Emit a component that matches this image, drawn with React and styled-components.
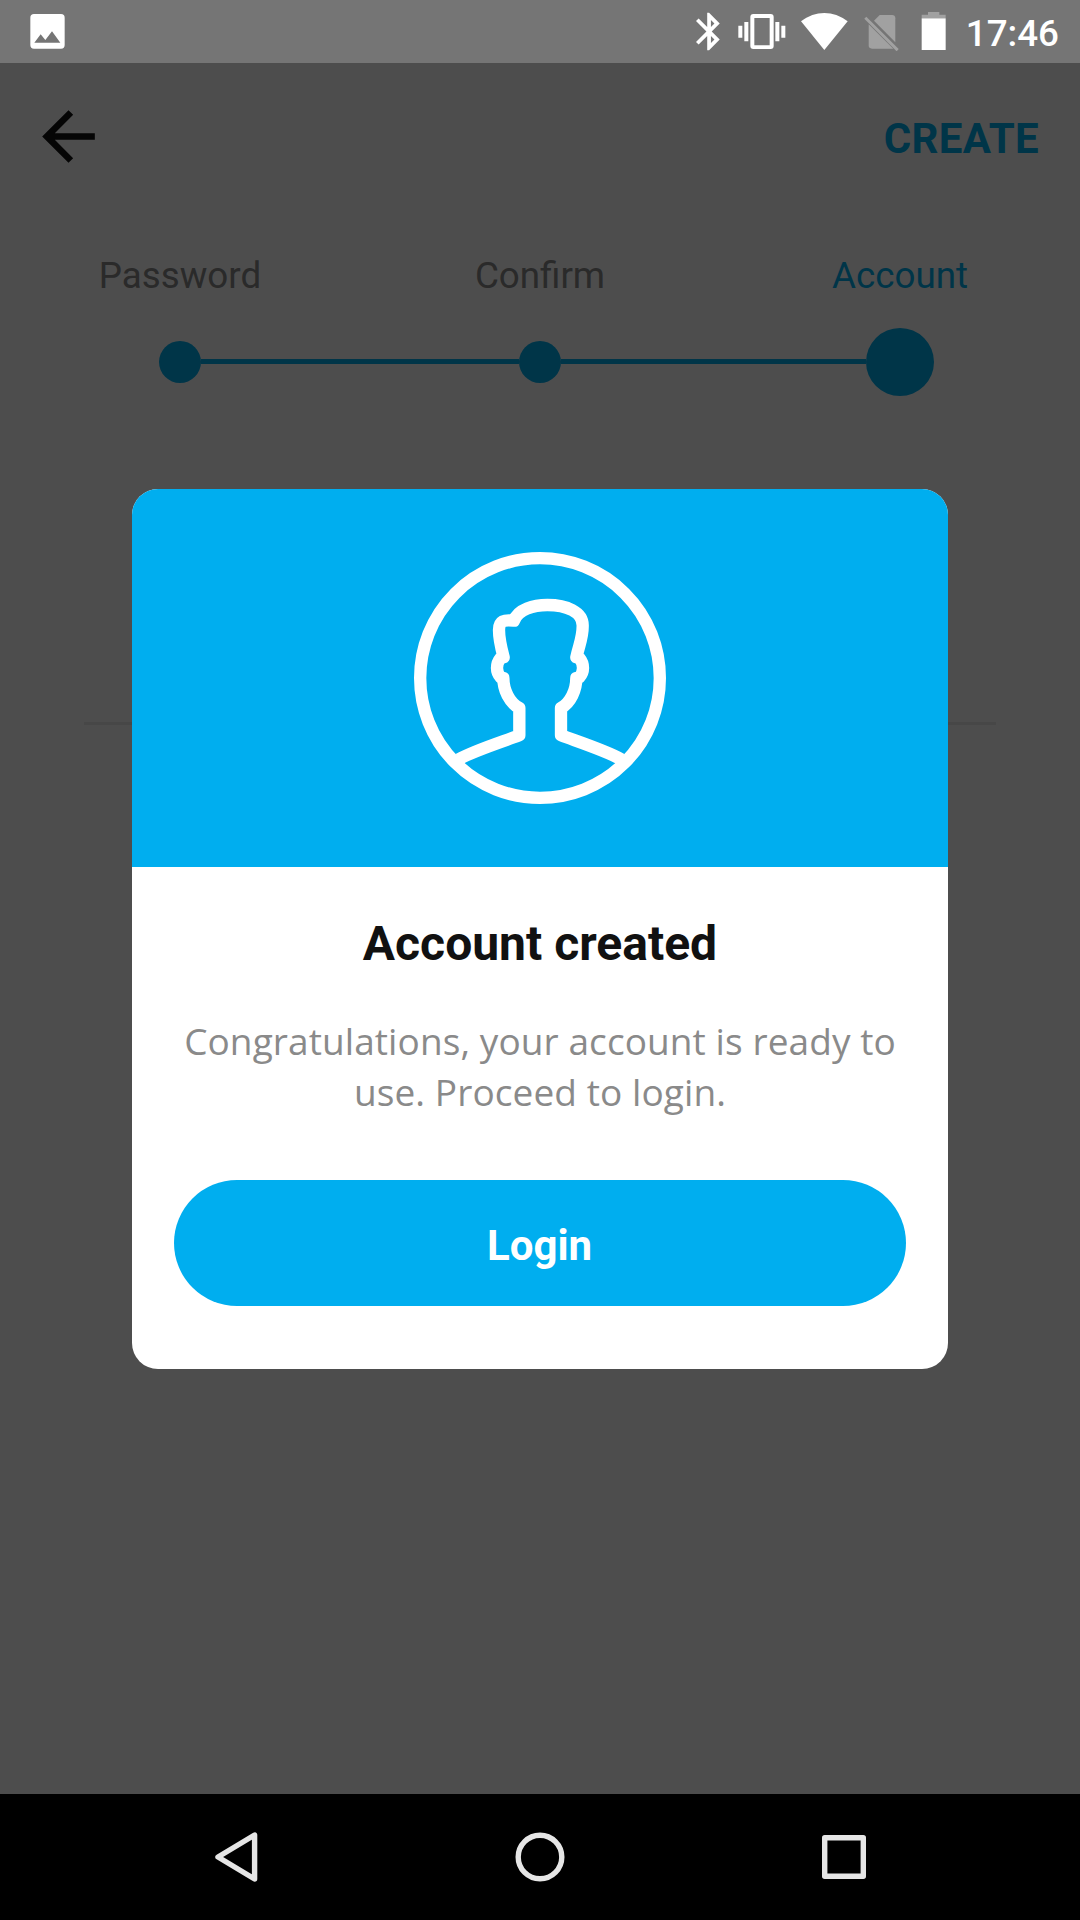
import React from "react";
import styled, { createGlobalStyle } from "styled-components";

const BLUE = "#00aeef";
const INK = "#111111";
const MUTED = "#8a8a8a";

const GlobalStyle = createGlobalStyle`
  *, *::before, *::after { box-sizing: border-box; }
  body { margin: 0; }
  svg { display: block; }
`;

const Phone = styled.div`
  display: flex;
  flex-direction: column;
  width: 1080px;
  height: 1920px;
  overflow: hidden;
  font-family: Roboto, "Liberation Sans", sans-serif;
`;

const StatusBar = styled.header`
  display: flex;
  align-items: flex-start;
  justify-content: space-between;
  height: 63px;
  padding: 12px 21px 0 30px;
  background: #757575;
  color: #ffffff;
`;

const StatusIcons = styled.div`
  display: flex;
  align-items: flex-start;
`;

const StatusGlyph = styled.svg`
  width: ${(p) => p.$width}px;
  height: 39px;
  margin-right: ${(p) => p.$after || 0}px;
  fill: currentColor;
`;

const Clock = styled.time`
  font-size: 36.75px;
  font-weight: 500;
  line-height: 43px;
`;

const Screen = styled.main`
  position: relative;
  flex: 1;
  display: flex;
  flex-direction: column;
  background: #ffffff;
`;

const Toolbar = styled.div`
  display: flex;
  align-items: center;
  justify-content: space-between;
  height: 147px;
  padding: 0 41px 0 29px;
`;

const IconButton = styled.button`
  padding: 0;
  border: 0;
  background: none;
  color: ${INK};
`;

const TextButton = styled.button`
  padding: 3px 0 0;
  border: 0;
  background: none;
  color: ${BLUE};
  font: 700 42px/49px Roboto, sans-serif;
  letter-spacing: 0.3px;
`;

const Stepper = styled.ol`
  display: grid;
  grid-template-columns: repeat(3, 1fr);
  width: 1080px;
  margin: 0;
  padding: 44px 0 0;
  list-style: none;
`;

const Step = styled.li`
  display: flex;
  flex-direction: column;
  align-items: center;
  gap: 30px;
`;

const StepLabel = styled.span`
  font-size: 36.75px;
  line-height: 43px;
  color: ${(p) => (p.$active ? BLUE : MUTED)};
`;

const Track = styled.div`
  display: grid;
  grid-template-columns: 1fr auto 1fr;
  align-items: center;
  width: 100%;
  height: 70px;
`;

const Rail = styled.span`
  height: 5px;
  margin-bottom: 1px;
  background: ${(p) => (p.$hidden ? "transparent" : BLUE)};
`;

const Dot = styled.span`
  width: ${(p) => (p.$active ? 68 : 42)}px;
  height: ${(p) => (p.$active ? 68 : 42)}px;
  border-radius: 50%;
  background: ${BLUE};
`;

const FieldLine = styled.hr`
  width: 912px;
  height: 3px;
  margin: 325px auto 0;
  border: 0;
  background: #ececec;
`;

const Overlay = styled.div`
  position: absolute;
  inset: 0;
  display: flex;
  align-items: center;
  justify-content: center;
  background: rgba(0, 0, 0, 0.698);
`;

const Dialog = styled.section`
  width: 816px;
  height: 880px;
  margin-top: 1px;
  border-radius: 26px;
  overflow: hidden;
  background: #ffffff;
  text-align: center;
`;

const DialogHero = styled.div`
  display: flex;
  justify-content: center;
  padding: 63px 0;
  background: ${BLUE};
`;

const DialogBody = styled.div`
  display: flex;
  flex-direction: column;
  padding: 49px 42px 0;
`;

const Title = styled.h1`
  margin: 0;
  color: ${INK};
  font-size: 48px;
  font-weight: 700;
  line-height: 56px;
`;

const Message = styled.p`
  margin: 43px 0 0;
  color: ${MUTED};
  font: 400 37px/51px "Open Sans", "Noto Sans", sans-serif;
  letter-spacing: 0.09px;
`;

const PrimaryButton = styled.button`
  height: 126px;
  margin-top: 63px;
  padding: 5px 1px 0 0;
  border: 0;
  border-radius: 63px;
  background: ${BLUE};
  color: #ffffff;
  font: 700 42px/49px Roboto, sans-serif;
`;

const NavBar = styled.nav`
  display: grid;
  grid-template-columns: 304px 304px 304px;
  justify-content: center;
  align-items: center;
  justify-items: center;
  height: 126px;
  background: #000000;
`;

const NavGlyph = styled.svg`
  width: 54px;
  height: 54px;
  fill: none;
  stroke: #e6e6e6;
  stroke-width: 5.4;
  stroke-linejoin: round;
`;

const steps = ["Password", "Confirm", "Account"];

function StatusArea() {
  return (
    <StatusBar>
      <StatusGlyph $width={36} viewBox="90 36 108 117">
        <path
          fillRule="evenodd"
          d="M102 42H183Q194 42 194 53V135Q194 146 183 146H102Q91 146 91 135V53Q91 42 102 42ZM103 128H181L156 94L136 120L122 103Z"
        />
      </StatusGlyph>
      <StatusIcons>
        <StatusGlyph $width={26} $after={16} viewBox="48 36 78 117">
          <path
            transform="translate(20 27.3) scale(5.6)"
            d="M17.71 7.71L12 2h-1v7.59L6.41 5 5 6.41 10.59 12 5 17.59 6.41 19 11 14.41V22h1l5.71-5.71-4.3-4.29 4.3-4.29zM13 5.83l1.88 1.88L13 9.59V5.83zm1.88 10.46L13 18.17v-3.76l1.88 1.88z"
          />
        </StatusGlyph>
        <StatusGlyph $width={48} $after={15} viewBox="176 36 144 117">
          <path
            fillRule="evenodd"
            d="M222 42H274Q283 42 283 51V138Q283 147 274 147H222Q213 147 213 138V51Q213 42 222 42ZM225 54V136H271V54ZM195 66H207V124H195ZM177 77H189V113H177ZM288 66H300V124H288ZM306 77H318V113H306Z"
          />
        </StatusGlyph>
        <StatusGlyph $width={47} $after={16} viewBox="362 36 141 117">
          <path d="M432 150L362 64Q395 39 432 39Q469 39 502 64Z" />
        </StatusGlyph>
        <StatusGlyph $width={36} $after={21} viewBox="551 36 108 117">
          <g fill="#a1a1a1">
            <path d="M581 62L598 45H635Q645 45 645 55V127Z" />
            <path d="M565 73L639 146H575Q565 146 565 136Z" />
            <path d="M552 56L558 50L655 147L649 154Z" />
          </g>
        </StatusGlyph>
        <StatusGlyph $width={25} $after={20} viewBox="724 36 75 117">
          <path fill="#a1a1a1" d="M745 36H779V44H798V55H726V44H745Z" />
          <path d="M726 55H798V150H726Z" />
        </StatusGlyph>
        <Clock>17:46</Clock>
      </StatusIcons>
    </StatusBar>
  );
}

function Avatar() {
  return (
    <svg
      width="252"
      height="252"
      viewBox="42 36 756 756"
      fill="none"
      stroke="#ffffff"
      strokeWidth="37"
      strokeLinejoin="round"
    >
      <circle cx="420" cy="414" r="359.5" />
      <path d="M176 658C222 632 302 607 358 586V504C328 488 310 450 310 414L302 412Q291 400 291 384Q291 367 302 354L311 352C302 318 297 300 297 270C297 243 312 238 342 242C354 207 402 195 442 195C500 195 548 216 548 256C549 292 538 312 529 352L538 354Q549 367 549 384Q549 400 538 412L529 414C529 450 512 488 483 504V586C540 607 618 632 664 658" />
    </svg>
  );
}

export default function App() {
  const last = steps.length - 1;
  return (
    <Phone>
      <GlobalStyle />
      <StatusArea />
      <Screen>
        <Toolbar>
          <IconButton aria-label="Back">
            <svg width="79" height="79" viewBox="0 0 24 24" fill="currentColor">
              <path d="M20 11H7.83l5.59-5.59L12 4l-8 8 8 8 1.41-1.41L7.83 13H20v-2z" />
            </svg>
          </IconButton>
          <TextButton>CREATE</TextButton>
        </Toolbar>
        <Stepper>
          {steps.map((label, i) => (
            <Step key={label}>
              <StepLabel $active={i === last}>{label}</StepLabel>
              <Track>
                <Rail $hidden={i === 0} />
                <Dot $active={i === last} />
                <Rail $hidden={i === last} />
              </Track>
            </Step>
          ))}
        </Stepper>
        <FieldLine />
        <Overlay>
          <Dialog role="dialog">
            <DialogHero>
              <Avatar />
            </DialogHero>
            <DialogBody>
              <Title>Account created</Title>
              <Message>
                Congratulations, your account is ready to use. Proceed to login.
              </Message>
              <PrimaryButton>Login</PrimaryButton>
            </DialogBody>
          </Dialog>
        </Overlay>
      </Screen>
      <NavBar>
        <NavGlyph viewBox="0 0 54 54">
          <path d="M45.6 5V49L9 27Z" />
        </NavGlyph>
        <NavGlyph viewBox="0 0 54 54">
          <circle cx="27" cy="27" r="21.8" />
        </NavGlyph>
        <NavGlyph viewBox="0 0 54 54">
          <rect x="7.7" y="7.7" width="38.6" height="38.6" />
        </NavGlyph>
      </NavBar>
    </Phone>
  );
}
